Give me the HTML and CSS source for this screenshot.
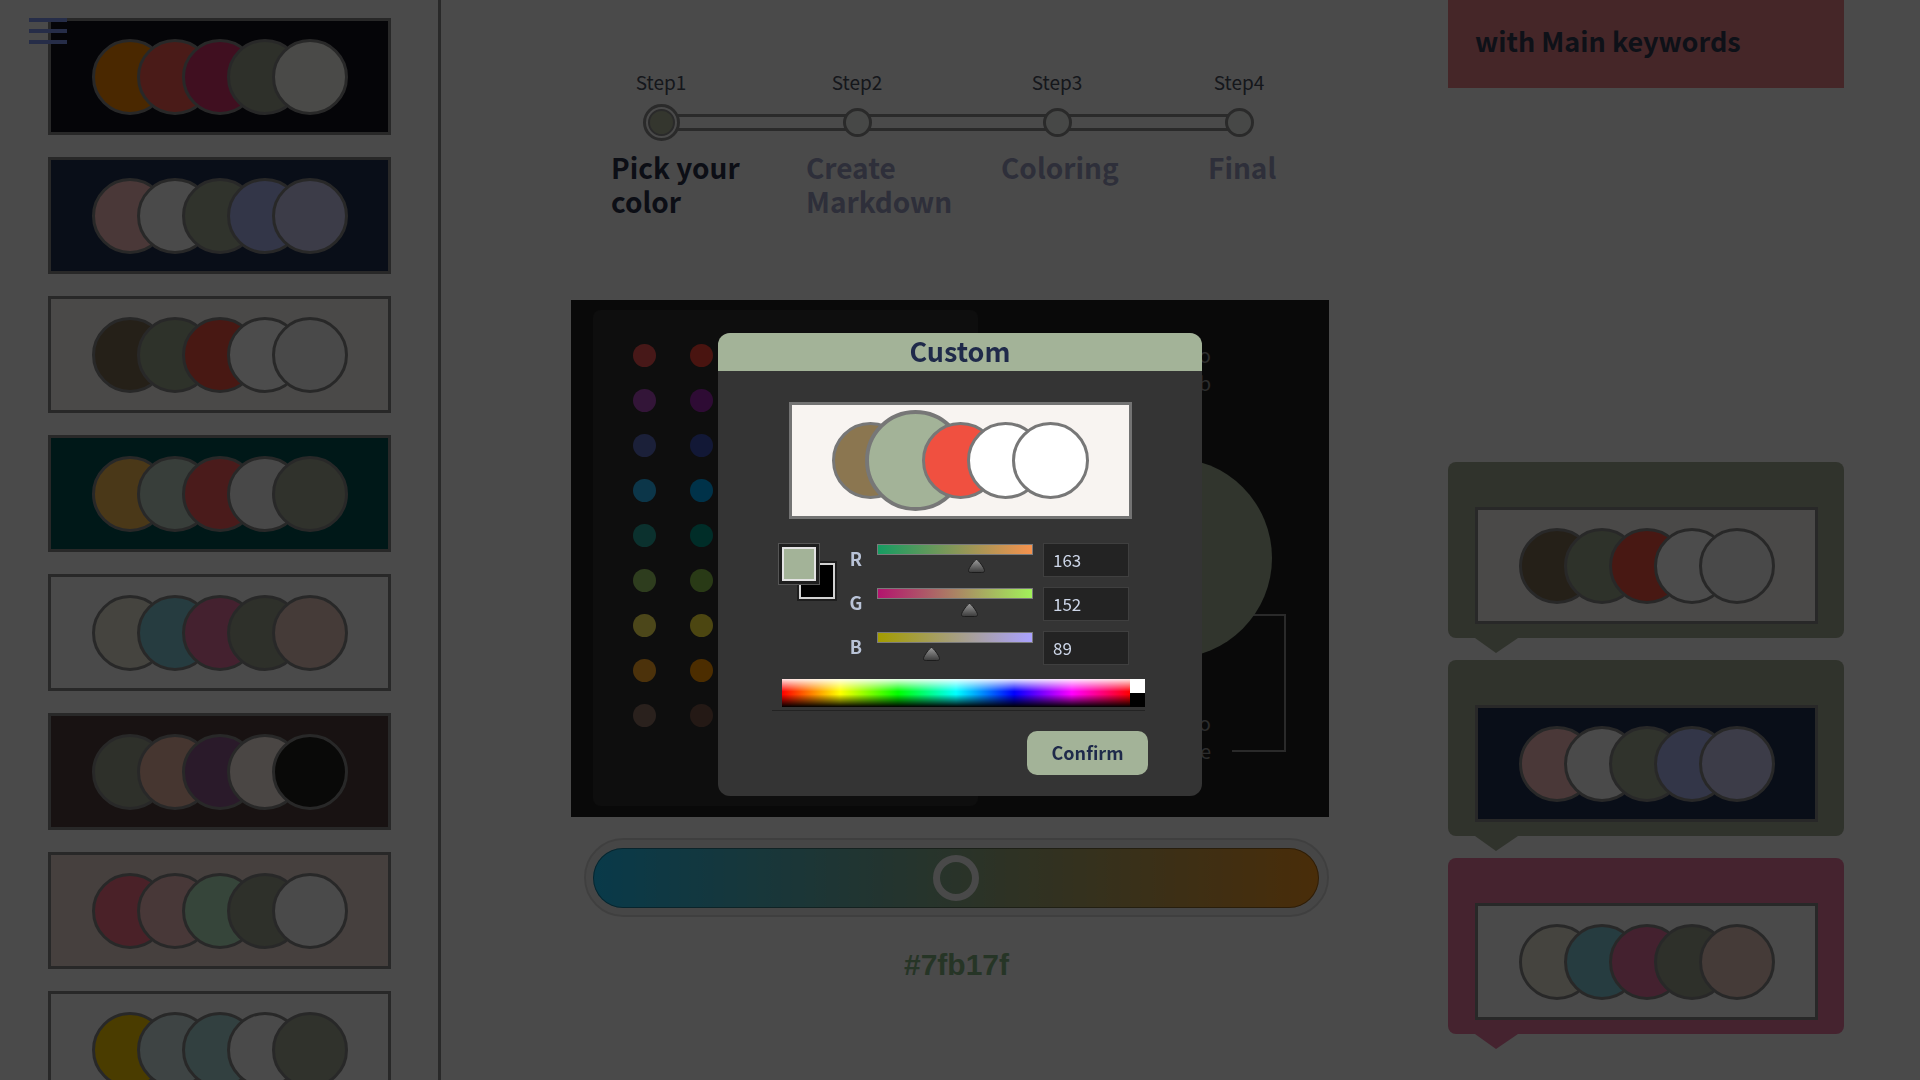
FILE: index.html
```html
<!DOCTYPE html>
<html lang="en">
<head>
<meta charset="utf-8">
<title>Color Palette Maker</title>
<link rel="stylesheet" href="styles.css">
</head>
<body>
<div class="app">
  <aside class="sidebar">
    <button class="menu-btn" aria-label="menu"><span></span><span></span><span></span></button>
    <div class="palette-list">
      <div class="palette" style="background:#11111b"><i class="c" style="background:#f78500"></i><i class="c" style="background:#f75d50"></i><i class="c" style="background:#d5326b"></i><i class="c" style="background:#99a08c"></i><i class="c" style="background:#f7f7f0"></i></div>
      <div class="palette" style="background:#212f50"><i class="c" style="background:#f7bbbb"></i><i class="c" style="background:#f7f7f7"></i><i class="c" style="background:#a0aa93"></i><i class="c" style="background:#aab4f0"></i><i class="c" style="background:#c8c8f0"></i></div>
      <div class="palette" style="background:#f8f4f1"><i class="c" style="background:#7d6b52"></i><i class="c" style="background:#9ca78c"></i><i class="c" style="background:#f05040"></i><i class="c" style="background:#ffffff"></i><i class="c" style="background:#f4f4f4"></i></div>
      <div class="palette" style="background:#005050"><i class="c" style="background:#f7bb50"></i><i class="c" style="background:#bbcfc1"></i><i class="c" style="background:#f75d5d"></i><i class="c" style="background:#f2f2f2"></i><i class="c" style="background:#a0a793"></i></div>
      <div class="palette" style="background:#f7f7f7"><i class="c" style="background:#e6e3d2"></i><i class="c" style="background:#7fc8d5"></i><i class="c" style="background:#e3719d"></i><i class="c" style="background:#99a08c"></i><i class="c" style="background:#e6c5bb"></i></div>
      <div class="palette" style="background:#503f3c"><i class="c" style="background:#99a08c"></i><i class="c" style="background:#e9b4a0"></i><i class="c" style="background:#8c578c"></i><i class="c" style="background:#f7e9e3"></i><i class="c" style="background:#211e1b"></i></div>
      <div class="palette" style="background:#e9d5cf"><i class="c" style="background:#f77185"></i><i class="c" style="background:#f0bbbb"></i><i class="c" style="background:#b4e6c1"></i><i class="c" style="background:#99a08c"></i><i class="c" style="background:#f7f7f7"></i></div>
      <div class="palette" style="background:#f7f7f7"><i class="c" style="background:#f7c800"></i><i class="c" style="background:#cfe3e3"></i><i class="c" style="background:#a7d5d5"></i><i class="c" style="background:#f7f7f7"></i><i class="c" style="background:#a0a793"></i></div>
      <div class="palette" style="background:#11111b"><i class="c" style="background:#f78500"></i><i class="c" style="background:#f75d50"></i><i class="c" style="background:#d5326b"></i><i class="c" style="background:#99a08c"></i><i class="c" style="background:#f7f7f0"></i></div>
    </div>
  </aside>

  <main class="main">
    <div class="stepper">
      <div class="track"></div>
      <div class="step step-1 active">
        <div class="step-label">Step1</div>
        <div class="step-node"><span class="node-ring"><span class="node-core"></span></span></div>
        <div class="step-desc">Pick your color</div>
      </div>
      <div class="step step-2">
        <div class="step-label">Step2</div>
        <div class="step-node"><span class="node"></span></div>
        <div class="step-desc">Create Markdown</div>
      </div>
      <div class="step step-3">
        <div class="step-label">Step3</div>
        <div class="step-node"><span class="node"></span></div>
        <div class="step-desc">Coloring</div>
      </div>
      <div class="step step-4">
        <div class="step-label">Step4</div>
        <div class="step-node"><span class="node"></span></div>
        <div class="step-desc">Final</div>
      </div>
    </div>

    <section class="stage">
      <div class="swatch-panel">
        <i style="background:#ef5350"></i><i style="background:#f44336"></i><i style="background:#e53935"></i><i style="background:#d32f2f"></i><i style="background:#c62828"></i><i style="background:#b71c1c"></i>
        <i style="background:#ab47bc"></i><i style="background:#9c27b0"></i><i style="background:#8e24aa"></i><i style="background:#7b1fa2"></i><i style="background:#6a1b9a"></i><i style="background:#4a148c"></i>
        <i style="background:#5c6bc0"></i><i style="background:#3f51b5"></i><i style="background:#3949ab"></i><i style="background:#303f9f"></i><i style="background:#283593"></i><i style="background:#1a237e"></i>
        <i style="background:#29b6f6"></i><i style="background:#03a9f4"></i><i style="background:#039be5"></i><i style="background:#0288d1"></i><i style="background:#0277bd"></i><i style="background:#01579b"></i>
        <i style="background:#26a69a"></i><i style="background:#009688"></i><i style="background:#00897b"></i><i style="background:#00796b"></i><i style="background:#00695c"></i><i style="background:#004d40"></i>
        <i style="background:#9ccc65"></i><i style="background:#8bc34a"></i><i style="background:#7cb342"></i><i style="background:#689f38"></i><i style="background:#558b2f"></i><i style="background:#33691e"></i>
        <i style="background:#ffee58"></i><i style="background:#ffeb3b"></i><i style="background:#fdd835"></i><i style="background:#fbc02d"></i><i style="background:#f9a825"></i><i style="background:#f57f17"></i>
        <i style="background:#ffa726"></i><i style="background:#ff9800"></i><i style="background:#fb8c00"></i><i style="background:#f57c00"></i><i style="background:#ef6c00"></i><i style="background:#e65100"></i>
        <i style="background:#8d6e63"></i><i style="background:#795548"></i><i style="background:#6d4c41"></i><i style="background:#5d4037"></i><i style="background:#4e342e"></i><i style="background:#3e2723"></i>
      </div>
      <div class="cap cap-top">Hello<br>Web</div>
      <div class="preview-circle"></div>
      <div class="bracket"></div>
      <div class="cap cap-bottom">Logo<br>Here</div>
    </section>

    <div class="tone">
      <div class="tone-bar"><span class="tone-thumb"></span></div>
    </div>
    <div class="hex">#7fb17f</div>
  </main>

  <aside class="right">
    <div class="keywords">with Main keywords</div>
    <div class="bubbles">
      <div class="bubble bubble-sage">
        <div class="palette" style="background:#f8f4f1"><i class="c" style="background:#7d6b52"></i><i class="c" style="background:#9ca78c"></i><i class="c" style="background:#f05040"></i><i class="c" style="background:#ffffff"></i><i class="c" style="background:#f4f4f4"></i></div>
      </div>
      <div class="bubble bubble-sage">
        <div class="palette" style="background:#212f50"><i class="c" style="background:#f7bbbb"></i><i class="c" style="background:#f7f7f7"></i><i class="c" style="background:#a0aa93"></i><i class="c" style="background:#aab4f0"></i><i class="c" style="background:#c8c8f0"></i></div>
      </div>
      <div class="bubble bubble-pink">
        <div class="palette" style="background:#f7f7f7"><i class="c" style="background:#e6e3d2"></i><i class="c" style="background:#7fc8d5"></i><i class="c" style="background:#e3719d"></i><i class="c" style="background:#99a08c"></i><i class="c" style="background:#e6c5bb"></i></div>
      </div>
    </div>
  </aside>
</div>

<div class="overlay"></div>

<div class="modal" role="dialog" aria-label="Custom">
  <div class="modal-head">Custom</div>
  <div class="modal-body">
    <div class="preview">
      <i class="pc" style="background:#8b7650"></i>
      <i class="pc sel" style="background:#a3b398"></i>
      <i class="pc" style="background:#f05040"></i>
      <i class="pc" style="background:#ffffff"></i>
      <i class="pc" style="background:#ffffff"></i>
    </div>

    <div class="rgb">
      <div class="swatch"><span class="sw-back"></span><span class="sw-front"></span></div>

      <div class="ch">R</div>
      <div class="bar-cell"><div class="bar bar-r"></div><span class="thumb" style="left:63.9%"><svg viewBox="0 0 19 16" width="19" height="16"><defs><linearGradient id="tg" x1="0" y1="0" x2="0" y2="1"><stop offset="0" stop-color="#9c9c9c"/><stop offset="1" stop-color="#3a3a3a"/></linearGradient></defs><path d="M9.5 1.5C11 1.5 17.5 10 17.5 12.5C17.5 14.5 16 14.5 14.5 14.5H4.5C3 14.5 1.5 14.5 1.5 12.5C1.5 10 8 1.5 9.5 1.5Z" fill="url(#tg)" stroke="#1c1c1c"/></svg></span></div>
      <div class="num">163</div>

      <div class="ch">G</div>
      <div class="bar-cell"><div class="bar bar-g"></div><span class="thumb" style="left:59.6%"><svg viewBox="0 0 19 16" width="19" height="16"><path d="M9.5 1.5C11 1.5 17.5 10 17.5 12.5C17.5 14.5 16 14.5 14.5 14.5H4.5C3 14.5 1.5 14.5 1.5 12.5C1.5 10 8 1.5 9.5 1.5Z" fill="url(#tg)" stroke="#1c1c1c"/></svg></span></div>
      <div class="num">152</div>

      <div class="ch">B</div>
      <div class="bar-cell"><div class="bar bar-b"></div><span class="thumb" style="left:34.9%"><svg viewBox="0 0 19 16" width="19" height="16"><path d="M9.5 1.5C11 1.5 17.5 10 17.5 12.5C17.5 14.5 16 14.5 14.5 14.5H4.5C3 14.5 1.5 14.5 1.5 12.5C1.5 10 8 1.5 9.5 1.5Z" fill="url(#tg)" stroke="#1c1c1c"/></svg></span></div>
      <div class="num">89</div>
    </div>

    <div class="hue-row"><div class="hue"></div><div class="bw"></div></div>

    <div class="actions"><button class="confirm">Confirm</button></div>
  </div>
</div>
</body>
</html>
```

FILE: styles.css
```css
* { box-sizing: border-box; margin: 0; padding: 0; }

html, body { width: 1920px; height: 1080px; overflow: hidden; }

body {
  background: #f7f7f7;
  font-family: "Noto Sans CJK KR", "Noto Sans", sans-serif;
}

.app { display: flex; height: 1080px; }

/* ---------- sidebar ---------- */
.sidebar {
  position: relative;
  width: 441px;
  flex: none;
  border-right: 3px solid #8a8a8a;
  padding: 18px 0 0 48px;
  overflow: hidden;
}

.menu-btn {
  position: absolute;
  left: 29px;
  top: 18px;
  width: 38px;
  height: 26px;
  display: flex;
  flex-direction: column;
  justify-content: space-between;
  background: none;
  border: 0;
  z-index: 2;
}
.menu-btn span { display: block; height: 4px; background: #8196f2; }

.palette-list { display: flex; flex-direction: column; gap: 22px; }

.palette {
  width: 343px;
  height: 117px;
  flex: none;
  border: 3px solid #878787;
  display: flex;
  align-items: center;
  justify-content: center;
}
.palette .c {
  position: relative;
  width: 76px;
  height: 76px;
  flex: none;
  border-radius: 50%;
  border: 3px solid #878787;
}
.palette .c + .c { margin-left: -31px; }

/* ---------- main ---------- */
.main { width: 1007px; flex: none; }

.stepper {
  position: relative;
  margin: 69px 0 0 170px;
  width: 720px;
  display: grid;
  grid-template-columns: 195px 195px 207px 123px;
}

.track {
  position: absolute;
  left: 50px;
  top: 45px;
  width: 579px;
  height: 17px;
  background: #f7f7f7;
  border-top: 3px solid #8c8c8c;
  border-bottom: 3px solid #8c8c8c;
}

.step { display: flex; flex-direction: column; }

.step-label {
  width: 100px;
  text-align: center;
  font-size: 19px;
  line-height: 26px;
  color: #464d5d;
}
.step-node {
  position: relative;
  z-index: 1;
  width: 100px;
  height: 37px;
  margin-top: 9px;
  display: flex;
  align-items: center;
  justify-content: center;
}
.step-2 .step-label, .step-2 .step-node { margin-left: 1px; }
.step-3 .step-label, .step-3 .step-node { margin-left: 6px; }
.step-4 .step-label, .step-4 .step-node { margin-left: -19px; }

.node {
  width: 29px;
  height: 29px;
  border-radius: 50%;
  border: 3px solid #8c8c8c;
  background: #eef2ee;
}
.node-ring {
  width: 37px;
  height: 37px;
  border-radius: 50%;
  border: 3px solid #8c8c8c;
  background: #f7f7f7;
  padding: 2px;
}
.node-core {
  display: block;
  width: 27px;
  height: 27px;
  border-radius: 50%;
  border: 2px solid #8c8c8c;
  background: #adb499;
}

.step-desc {
  margin-top: 9px;
  max-width: 150px;
  font-size: 28px;
  line-height: 34px;
  font-weight: 700;
  color: #999dc1;
}
.step.active .step-desc { color: #282f49; }

/* stage */
.stage {
  position: relative;
  margin: 82px 0 0 130px;
  width: 758px;
  height: 517px;
  background: #212121;
  padding: 10px 0 0 22px;
  overflow: hidden;
}
.swatch-panel {
  width: 385px;
  height: 496px;
  border-radius: 8px;
  background: #2f2f2f;
  padding: 34px 0 0 40px;
  display: grid;
  grid-template-columns: repeat(6, 23px);
  grid-auto-rows: 23px;
  column-gap: 34px;
  row-gap: 22px;
  align-content: start;
}
.swatch-panel i { width: 23px; height: 23px; border-radius: 50%; }

.preview-circle {
  position: absolute;
  left: 501px;
  top: 158px;
  width: 200px;
  height: 200px;
  border-radius: 50%;
  background: #a3b398;
  z-index: 1;
}
.bracket {
  position: absolute;
  left: 661px;
  top: 314px;
  width: 54px;
  height: 138px;
  border: 2px solid #8c8c8c;
  border-left: 0;
}
.cap {
  position: absolute;
  right: 118px;
  text-align: right;
  font-size: 20px;
  line-height: 28px;
  color: #939393;
}
.cap-top { top: 41px; }
.cap-bottom { top: 409px; }

/* tone slider */
.tone {
  margin: 21px 0 0 143px;
  width: 745px;
  height: 79px;
  border-radius: 40px;
  background: #ececec;
  border: 2px solid #d4d4d4;
  padding: 8px 8px 7px 7px;
}
.tone-bar {
  position: relative;
  height: 60px;
  border-radius: 30px;
  background: linear-gradient(90deg, #1fc1f5, #f5961f);
  box-shadow: inset 0 0 0 1px rgba(0, 0, 0, 0.35);
}
.tone-thumb {
  position: absolute;
  left: 50%;
  top: 50%;
  width: 46px;
  height: 46px;
  margin: -23px 0 0 -23px;
  border: 7px solid #f4f4f4;
  border-radius: 50%;
}

.hex {
  margin: 30px 0 0 143px;
  width: 745px;
  text-align: center;
  font: 700 30px/36px "Liberation Sans", Arial, sans-serif;
  color: #7fb17f;
}

/* ---------- right column ---------- */
.right { width: 396px; flex: none; }

.keywords {
  height: 88px;
  background: #e67f85;
  padding: 21px 0 0 27px;
  font-size: 27px;
  line-height: 40px;
  font-weight: 700;
  color: #2f3950;
}

.bubbles {
  margin-top: 374px;
  display: flex;
  flex-direction: column;
  gap: 22px;
}
.bubble {
  position: relative;
  border-radius: 8px;
  padding: 45px 26px 14px 27px;
  background: var(--bc);
}
.bubble::after {
  content: "";
  position: absolute;
  left: 27px;
  top: 100%;
  border-left: 21px solid transparent;
  border-right: 22px solid transparent;
  border-top: 15px solid var(--bc);
}
.bubble-sage { --bc: #a0aa93; }
.bubble-pink { --bc: #e6759d; }

/* ---------- overlay + modal ---------- */
.overlay {
  position: fixed;
  inset: 0;
  background: rgba(0, 0, 0, 0.7);
  z-index: 10;
}

.modal {
  position: fixed;
  z-index: 11;
  left: 718px;
  top: 333px;
  width: 484px;
  height: 463px;
  border-radius: 12px;
  background: #343434;
}
.modal-head {
  height: 38px;
  border-radius: 12px 12px 0 0;
  background: #a3b398;
  text-align: center;
  font-size: 27px;
  line-height: 36px;
  font-weight: 700;
  color: #1f2a4a;
}
.modal-body { padding-top: 31px; }

.preview {
  margin: 0 auto;
  width: 343px;
  height: 117px;
  border: 3px solid #737373;
  background: #f8f4f1;
  display: flex;
  align-items: center;
  justify-content: center;
}
.pc {
  position: relative;
  width: 77px;
  height: 77px;
  flex: none;
  border-radius: 50%;
  border: 3px solid #777;
}
.pc + .pc { margin-left: -32px; }
.pc.sel { transform: scale(1.31); }

.rgb {
  margin: 24px 0 0 60px;
  display: grid;
  grid-template-columns: 68px 31px 166px 86px;
  grid-template-rows: repeat(3, 34px);
  row-gap: 10px;
}
.swatch {
  grid-column: 1;
  grid-row: 1 / span 3;
  position: relative;
  width: 57px;
  height: 56px;
}
.sw-back {
  position: absolute;
  left: 21px;
  top: 20px;
  width: 36px;
  height: 36px;
  background: #000;
  border: 2px solid #d2d2d2;
  box-shadow: 0 0 0 2px #1e1e1e;
}
.sw-front {
  position: absolute;
  left: 4px;
  top: 4px;
  width: 34px;
  height: 34px;
  background: #a3b398;
  border: 2px solid #e2e2e2;
  box-shadow: 0 0 0 3px #1e1e1e, 0 0 0 4px #555;
}

.ch {
  width: 20px;
  text-align: center;
  font-size: 18px;
  line-height: 30px;
  font-weight: 700;
  color: #b9c3d7;
}
.bar-cell { position: relative; width: 156px; }
.bar {
  margin-top: 1px;
  width: 156px;
  height: 11px;
  border: 1px solid #7a7a7a;
}
.bar-r { background: linear-gradient(90deg, #169c62, #f6924e); }
.bar-g { background: linear-gradient(90deg, #b3146e, #a2f25a); }
.bar-b { background: linear-gradient(90deg, #a39c00, #aaa2ff); }
.thumb {
  position: absolute;
  top: 15px;
  width: 19px;
  height: 16px;
  margin-left: -9.5px;
}
.thumb svg { display: block; }

.num {
  width: 86px;
  height: 34px;
  background: #232323;
  border: 1px solid #3f3f3f;
  padding-left: 9px;
  font-size: 17px;
  line-height: 32px;
  color: #cdd6e8;
}

.hue-row {
  margin: 14px 57px 0 54px;
  padding: 0 0 3px 10px;
  border-bottom: 1px solid #232323;
  display: flex;
}
.hue {
  flex: 1;
  height: 28px;
  background:
    linear-gradient(180deg, rgba(255, 255, 255, 0.9) 0%, rgba(255, 255, 255, 0) 45%, rgba(0, 0, 0, 0) 55%, #000 100%),
    linear-gradient(90deg, #f00 0%, #ff0 16.7%, #0f0 33.3%, #0ff 50%, #00f 66.7%, #f0f 83.3%, #f00 100%);
}
.bw {
  width: 15px;
  height: 28px;
  background: linear-gradient(180deg, #fff 50%, #000 50%);
}

.actions {
  display: flex;
  justify-content: flex-end;
  margin: 20px 54px 0 0;
}
.confirm {
  width: 121px;
  height: 44px;
  border: 0;
  border-radius: 10px;
  background: #a3b398;
  padding-bottom: 3px;
  font-family: "Noto Sans CJK KR", "Noto Sans", sans-serif;
  font-size: 18px;
  font-weight: 700;
  color: #1f2a4a;
}
```
